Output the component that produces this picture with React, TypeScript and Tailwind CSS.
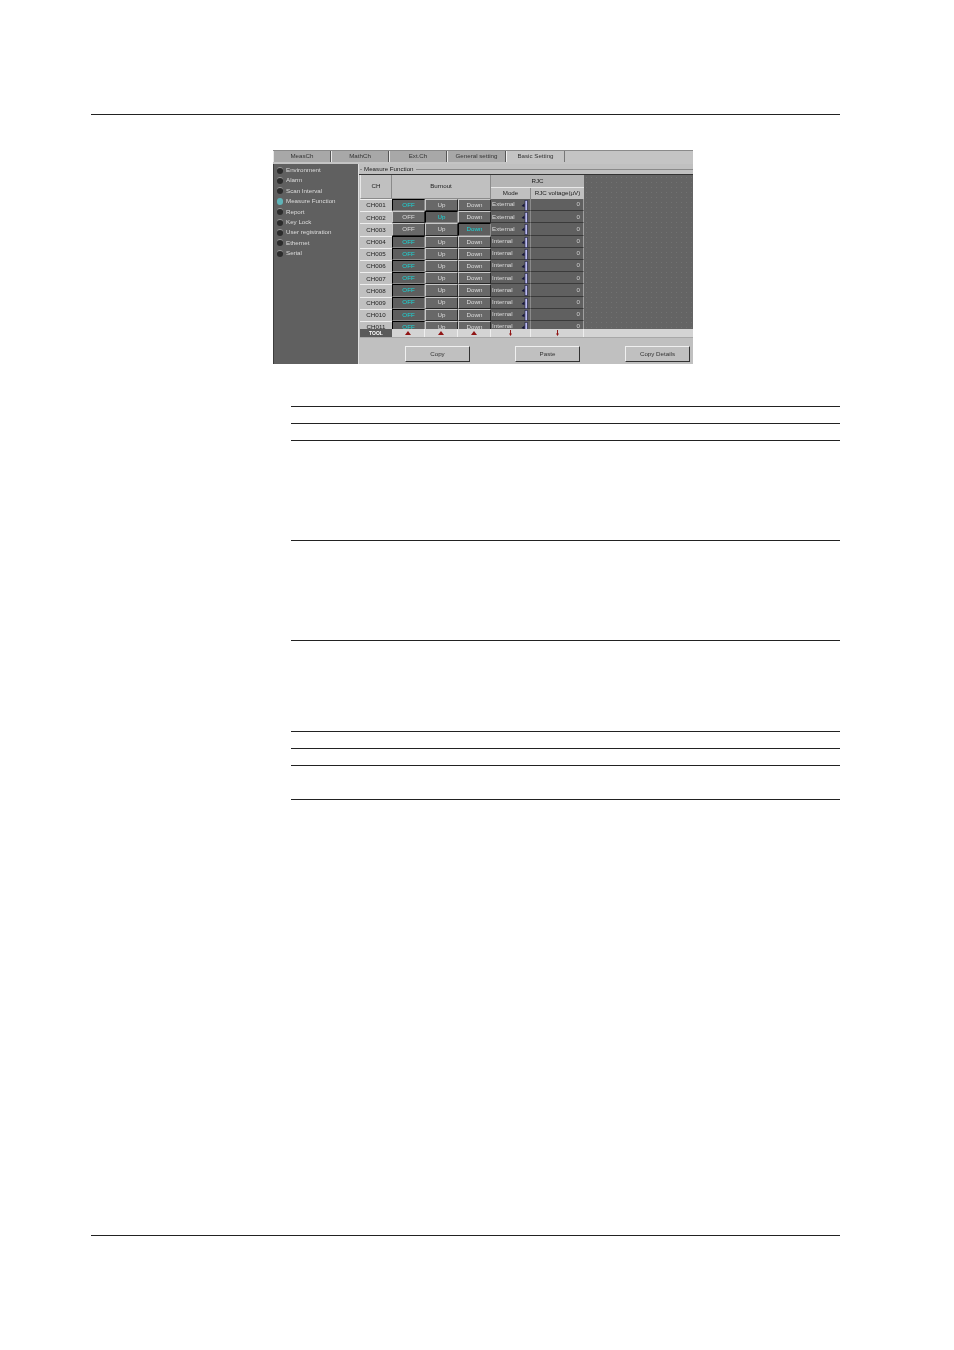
const tabs = [
  { name: "MeasCh", w: "w-[58px]" },
  { name: "MathCh", w: "w-[58px]" },
  { name: "Ext.Ch", w: "w-[58px]" },
  { name: "General setting", w: "w-[59px]" },
];

const menu = [
  "Environment",
  "Alarm",
  "Scan Interval",
  "Measure Function",
  "Report",
  "Key Lock",
  "User registration",
  "Ethernet",
  "Serial",
];

// on: index of the lit burnout button
const rows = [
  { ch: "CH001", on: 0, mode: "External" },
  { ch: "CH002", on: 1, mode: "External" },
  { ch: "CH003", on: 2, mode: "External" },
  { ch: "CH004", on: 0, mode: "Internal" },
  { ch: "CH005", on: 0, mode: "Internal" },
  { ch: "CH006", on: 0, mode: "Internal" },
  { ch: "CH007", on: 0, mode: "Internal" },
  { ch: "CH008", on: 0, mode: "Internal" },
  { ch: "CH009", on: 0, mode: "Internal" },
  { ch: "CH010", on: 0, mode: "Internal" },
  { ch: "CH011", on: 0, mode: "Internal" },
];

const ruleGaps = ["mt-[42px]", "mt-[16px]", "mt-[16px]", "mt-[99px]", "mt-[99px]", "mt-[90px]", "mt-[16px]", "mt-[16px]", "mt-[33px]"];

function Burnout({ label, lit }: { label: string; lit: boolean }) {
  return (
    <div
      className={
        lit
          ? "flex items-center justify-center border-t border-l border-t-black border-l-black border-b border-r border-b-[#8c8c8c] border-r-[#8c8c8c] bg-[#5e5e5e] text-[#19d8d8]"
          : "flex items-center justify-center border-t border-l border-t-[#c8c8c8] border-l-[#c8c8c8] border-b border-r border-b-[#262626] border-r-[#262626] bg-[#686868] text-[#dcdcdc]"
      }
    >
      {label}
    </div>
  );
}

function Spinner() {
  return (
    <svg width="8" height="11" viewBox="0 0 8 11" className="absolute right-[1px] top-[1px]">
      <path d="M3.5 3.5 L0.5 6 L3.5 7 Z" fill="#14143a" />
      <rect x="4" y="0.3" width="2.4" height="10.4" fill="#bcbcf4" stroke="#1c1c3c" strokeWidth="0.6" />
    </svg>
  );
}

function Row({ row }: { row: (typeof rows)[number] }) {
  return (
    <div className="grid grid-cols-[32px_33px_33px_33px_40px_53px] h-[12.2px] shrink-0 leading-none">
      <div className="flex items-center justify-center bg-[#c0c0c0] border-t border-t-[#eeeeee] text-[#222222]">{row.ch}</div>
      {["OFF", "Up", "Down"].map((label, idx) => (
        <Burnout key={label} label={label} lit={row.on === idx} />
      ))}
      <div className="relative flex items-center pl-[1px] bg-[#606060] border-b border-b-[#3a3a3a] border-r border-r-[#8a8a8a] text-[#dcdcdc]">
        {row.mode}
        <Spinner />
      </div>
      <div className="flex items-center justify-end pr-[3px] bg-[#606060] border-b border-b-[#3a3a3a] border-r border-r-[#a0a0a0] text-[#d0d0d0]">0</div>
    </div>
  );
}

function ToolMark({ type }: { type: "up" | "down" }) {
  return (
    <div className="flex items-center justify-center border-r border-r-[#eeeeee]">
      {type === "up" ? (
        <svg width="6" height="4" viewBox="0 0 6 4">
          <path d="M3 0 L6 4 L0 4 Z" fill="#901414" />
        </svg>
      ) : (
        <svg width="3" height="6" viewBox="0 0 3 6">
          <path d="M1 0 H2 V3.5 H3 L1.5 6 L0 3.5 H1 Z" fill="#901414" />
        </svg>
      )}
    </div>
  );
}

function ActionButton({ label }: { label: string }) {
  return (
    <div className="flex items-center justify-center w-[65px] h-[16px] bg-[#c0c0c0] border border-t-[#f0f0f0] border-l-[#f0f0f0] border-b-[#333333] border-r-[#333333] text-[#333333]">
      {label}
    </div>
  );
}

export default function App() {
  return (
    <div className="w-[954px] h-[1350px] bg-white overflow-hidden font-['Liberation_Sans',Arial,sans-serif]">
      <div className="ml-[91px] mt-[114px] w-[749px] h-px bg-[#222222]" />

      <div className="ml-[273px] mt-[35px] w-[420px] h-[214px] flex flex-col bg-[#c0c0c0] text-[6.2px] leading-none blur-[0.4px]">
        <div className="flex h-[14px] pb-[2px] bg-[#c4c4c4] border-t border-t-[#8a8a8a] text-[#333333] shrink-0">
          {tabs.map((t) => (
            <div key={t.name} className={`${t.w} flex items-center justify-center bg-[#a8a8a8] border-l border-l-[#e8e8e8] border-r border-r-[#555555]`}>
              {t.name}
            </div>
          ))}
          <div className="w-[59px] flex items-center justify-center bg-[#c4c4c4] border-l border-l-[#f0f0f0] border-r border-r-[#777777]">Basic Setting</div>
        </div>

        <div className="flex flex-1 min-h-0">
          <div className="w-[85px] bg-[#606060] border-l border-l-[#3c3c3c] pt-[1px] pl-[3px] shrink-0">
            {menu.map((m, idx) => (
              <div key={m} className="flex items-center gap-[3px] h-[10.4px] text-[#dcdcdc]">
                <div className={idx === 3 ? "w-[6px] h-[7px] rounded-full bg-[#5fb4b8]" : "w-[6px] h-[7px] rounded-full bg-[#2c2c2c] border-t border-t-[#9a9a9a]"} />
                <span>{m}</span>
              </div>
            ))}
          </div>

          <div className="flex-1 flex flex-col min-w-0 border-l border-l-[#e0e0e0]">
            <div className="flex items-center h-[10px] pl-[1px] gap-[2px] text-[#222222] shrink-0">
              <div className="w-[2px] h-px bg-[#8a8a8a]" />
              <span>Measure Function</span>
              <div className="flex-1 h-px bg-[#8a8a8a]" />
            </div>

            <div className="flex h-[155px] shrink-0 border-t border-t-[#333333] pl-[1px]">
              <div className="w-[224px] flex flex-col overflow-hidden shrink-0">
                <div className="grid grid-cols-[32px_99px_93px] h-[24px] shrink-0 text-[#222222]">
                  <div className="flex items-center justify-center border-l border-l-[#e8e8e8] border-r border-r-[#8a8a8a] border-b border-b-[#8a8a8a] bg-[#c0c0c0]">CH</div>
                  <div className="flex items-center justify-center border-r border-r-[#8a8a8a] border-b border-b-[#8a8a8a] bg-[#c0c0c0]">Burnout</div>
                  <div className="flex flex-col">
                    <div className="flex items-center justify-center h-[13px] bg-[#b4b4b4] border-b border-b-[#e8e8e8]">RJC</div>
                    <div className="grid grid-cols-[40px_53px] flex-1">
                      <div className="flex items-center justify-center border-r border-r-[#8a8a8a] bg-[#c0c0c0]">Mode</div>
                      <div className="flex items-center justify-center bg-[#c0c0c0] whitespace-nowrap">RJC voltage(µV)</div>
                    </div>
                  </div>
                </div>
                {rows.map((row) => (
                  <Row key={row.ch} row={row} />
                ))}
              </div>
              <div className="flex-1 bg-[#646464] bg-[radial-gradient(circle,#727272_0.9px,transparent_1px)] bg-[length:5px_5px]" />
            </div>

            <div className="grid grid-cols-[32px_33px_33px_33px_40px_53px_1fr] h-[9px] ml-[1px] bg-[#d4d4d4] border-b border-b-[#a8a8a8] shrink-0">
              <div className="flex items-center justify-center bg-[#5a5a5a] text-white font-bold text-[5px]">TOOL</div>
              <ToolMark type="up" />
              <ToolMark type="up" />
              <ToolMark type="up" />
              <ToolMark type="down" />
              <ToolMark type="down" />
              <div />
            </div>

            <div className="flex flex-1 items-start justify-between pt-[8px] pl-[46px] pr-[3px]">
              <ActionButton label="Copy" />
              <ActionButton label="Paste" />
              <ActionButton label="Copy Details" />
            </div>
          </div>
        </div>
      </div>

      <div className="ml-[291px] w-[549px]">
        {ruleGaps.map((gap, idx) => (
          <div key={idx} className={`${gap} h-px bg-[#222222]`} />
        ))}
      </div>

      <div className="ml-[91px] mt-[435px] w-[749px] h-px bg-[#222222]" />
    </div>
  );
}
